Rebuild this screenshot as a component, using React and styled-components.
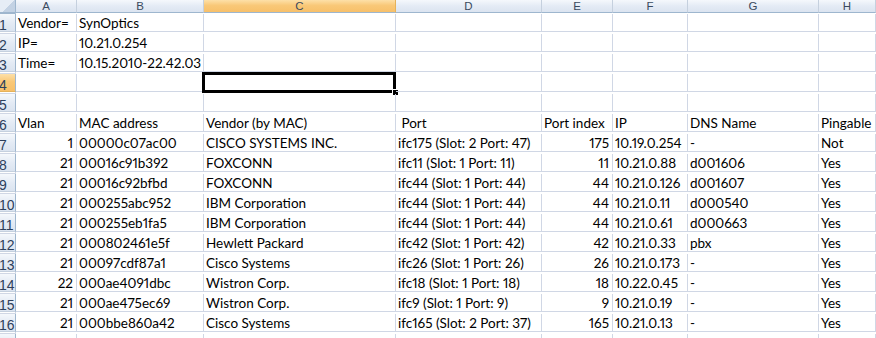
import React from "react";
import styled, { createGlobalStyle, css } from "styled-components";

const GlobalStyle = createGlobalStyle`
  html, body {
    margin: 0;
    padding: 0;
    background: #fff;
    overflow: hidden;
  }
`;

/* column widths incl. right grid line */
const COLS = "16px 61px 127px 192px 146px 71px 75px 131px 1fr";
const LETTERS = ["A", "B", "C", "D", "E", "F", "G", "H"];
const SEL_COL = 2; // C
const SEL_ROW = 4;

const rows = [
  ["Vendor=", "SynOptics"],
  ["IP=", "10.21.0.254"],
  ["Time=", "10.15.2010-22.42.03"],
  [],
  [],
  ["Vlan", "MAC address", "Vendor (by MAC)", " Port", "Port index", "IP", "DNS Name", "Pingable"],
  [1, "00000c07ac00", "CISCO SYSTEMS INC.", "ifc175 (Slot: 2 Port: 47)", 175, "10.19.0.254", "-", "Not"],
  [21, "00016c91b392", "FOXCONN", "ifc11 (Slot: 1 Port: 11)", 11, "10.21.0.88", "d001606", "Yes"],
  [21, "00016c92bfbd", "FOXCONN", "ifc44 (Slot: 1 Port: 44)", 44, "10.21.0.126", "d001607", "Yes"],
  [21, "000255abc952", "IBM Corporation", "ifc44 (Slot: 1 Port: 44)", 44, "10.21.0.11", "d000540", "Yes"],
  [21, "000255eb1fa5", "IBM Corporation", "ifc44 (Slot: 1 Port: 44)", 44, "10.21.0.61", "d000663", "Yes"],
  [21, "000802461e5f", "Hewlett Packard", "ifc42 (Slot: 1 Port: 42)", 42, "10.21.0.33", "pbx", "Yes"],
  [21, "00097cdf87a1", "Cisco Systems", "ifc26 (Slot: 1 Port: 26)", 26, "10.21.0.173", "-", "Yes"],
  [22, "000ae4091dbc", "Wistron Corp.", "ifc18 (Slot: 1 Port: 18)", 18, "10.22.0.45", "-", "Yes"],
  [21, "000ae475ec69", "Wistron Corp.", "ifc9 (Slot: 1 Port: 9)", 9, "10.21.0.19", "-", "Yes"],
  [21, "000bbe860a42", "Cisco Systems", "ifc165 (Slot: 2 Port: 37)", 165, "10.21.0.13", "-", "Yes"],
  [],
];

const App = () => {
  return (
    <>
      <GlobalStyle />
      <Sheet>
        <HeaderRow>
          <Corner />
          {LETTERS.map((l, i) => (
            <ColHead key={l} $active={i === SEL_COL}>{l}</ColHead>
          ))}
          <ColHead />
        </HeaderRow>

        {rows.map((row, ri) => {
          const n = ri + 1;
          return (
            <Row key={n}>
              <RowHead $active={n === SEL_ROW}>{n}</RowHead>
              {LETTERS.map((l, ci) => {
                const v = row[ci];
                return (
                  <Cell key={l} $num={typeof v === "number"}>
                    {v}
                    {n === SEL_ROW && ci === SEL_COL && (
                      <>
                        <Selection />
                        <FillHandle />
                      </>
                    )}
                  </Cell>
                );
              })}
              <Cell />
            </Row>
          );
        })}
      </Sheet>
    </>
  );
};
export default App;

const Sheet = styled.div`
  width: 876px;
  height: 338px;
  overflow: hidden;
  font: 13.5px/1 Lato, "Open Sans", sans-serif;
  font-variant-numeric: proportional-nums;
  color: #000;
`;

const HeaderRow = styled.div`
  display: grid;
  grid-template-columns: ${COLS};
  height: 14px;
`;

const Row = styled.div`
  display: grid;
  grid-template-columns: ${COLS};
  height: 20px;
`;

const headBg = css`
  background: ${(p) =>
    p.$active
      ? "linear-gradient(#fde0a8, #f9c878 45%, #f7c06a)"
      : "linear-gradient(#f5f8fc, #e4ebf5 50%, #dbe4f0)"};
`;

const Corner = styled.div`
  box-sizing: border-box;
  border-right: 1px solid #9eb6ce;
  border-bottom: 1px solid #9eb6ce;
  background: linear-gradient(135deg, #e6edf6 55%, #c3d2e4 55%);
`;

const ColHead = styled.div`
  box-sizing: border-box;
  ${headBg};
  border-right: 1px solid ${(p) => (p.$active ? "#e5b25a" : "#c5d0de")};
  border-bottom: 1px solid #9eb6ce;
  font: 11.5px/12px "Liberation Sans", Arial, sans-serif;
  color: #3a4a5e;
  text-align: center;
  overflow: hidden;
`;

const RowHead = styled.div`
  box-sizing: border-box;
  ${headBg};
  border-right: 1px solid #9eb6ce;
  border-bottom: 1px solid ${(p) => (p.$active ? "#e5b25a" : "#c5d0de")};
  font: 14px/22px "Liberation Sans", Arial, sans-serif;
  color: #2d405c;
  margin-left: -1px;
  overflow: hidden;
  white-space: nowrap;
`;

const Cell = styled.div`
  position: relative;
  box-sizing: border-box;
  border-right: 1px solid #d0d7e5;
  border-bottom: 1px solid #d0d7e5;
  display: flex;
  align-items: flex-end;
  justify-content: ${(p) => (p.$num ? "flex-end" : "flex-start")};
  padding: 0 3px 1px 2px;
  white-space: pre;
  min-width: 0;
`;

const Selection = styled.div`
  position: absolute;
  left: -2px;
  top: -2px;
  right: -1px;
  bottom: -2px;
  border: 3px solid #000;
  box-sizing: border-box;
  pointer-events: none;
`;

const FillHandle = styled.div`
  position: absolute;
  right: -3px;
  bottom: -4px;
  width: 5px;
  height: 5px;
  background: #000;
  outline: 1px solid #fff;
`;
